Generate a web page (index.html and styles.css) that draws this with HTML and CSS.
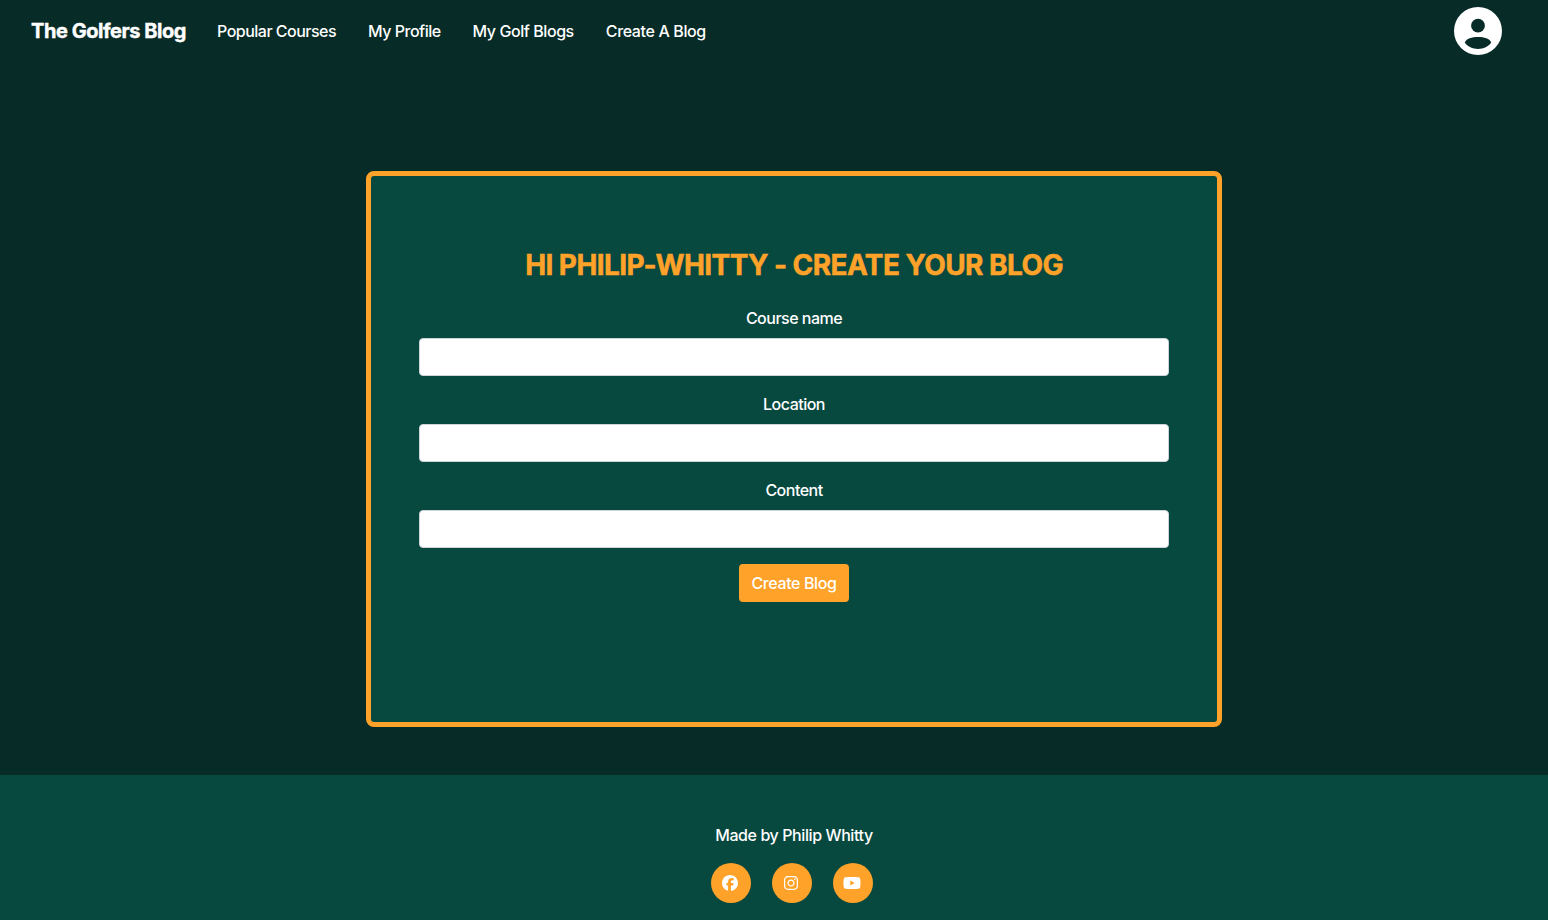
FILE: index.html
```html
<!DOCTYPE html>
<html lang="en">
<head>
<meta charset="utf-8">
<title>The Golfers Blog</title>
<link rel="stylesheet" href="styles.css">
</head>
<body>
<header class="navbar">
  <a class="brand">The Golfers Blog</a>
  <nav class="links">
    <a>Popular Courses</a>
    <a>My Profile</a>
    <a class="golf">My Golf Blogs</a>
    <a class="create">Create A Blog</a>
  </nav>
  <svg class="avatar" viewBox="0 0 48 48"><circle cx="24" cy="24" r="24" fill="#fff"/><circle class="cut" cx="24" cy="18.700" r="6.900"/><path class="cut" d="M10.800 35.600C12 31.400 18 29.900 24 29.900s12 1.500 13.200 5.700C34.500 39.700 29.500 41.900 24 41.900S13.500 39.700 10.800 35.600z"/></svg>
</header>
<main class="main">
  <form class="card">
    <h1 class="title">HI PHILIP-WHITTY - CREATE YOUR BLOG</h1>
    <div class="field"><label for="course">Course name</label><input id="course" type="text"></div>
    <div class="field"><label for="location">Location</label><input id="location" type="text"></div>
    <div class="field"><label for="content">Content</label><input id="content" type="text"></div>
    <button class="submit" type="button">Create Blog</button>
  </form>
</main>
<footer class="footer">
  <p class="credit">Made by Philip Whitty</p>
  <div class="social">
    <a><svg width="16" height="16" viewBox="0 0 512 512"><path d="M512 256C512 114.600 397.400 0 256 0S0 114.600 0 256C0 376 82.700 476.800 194.200 504.500V334.200H141.400V256h52.800V222.300c0-87.100 39.400-127.500 125-127.500c16.200 0 44.200 3.200 55.700 6.400V172c-6-.6-16.500-1-29.600-1c-42 0-58.200 15.900-58.200 57.200V256h83.600l-14.400 78.200H287V510.100C413.800 494.800 512 386.900 512 256z"/></svg></a>
    <a><svg width="14" height="16" viewBox="0 0 448 512"><path d="M224.100 141c-63.600 0-114.900 51.300-114.900 114.900s51.300 114.900 114.900 114.900S339 319.500 339 255.900 287.700 141 224.100 141zm0 189.600c-41.100 0-74.700-33.500-74.700-74.700s33.500-74.700 74.700-74.700 74.700 33.500 74.700 74.700-33.600 74.700-74.700 74.700zm146.400-194.300c0 14.900-12 26.800-26.800 26.800-14.900 0-26.800-12-26.800-26.800s12-26.800 26.800-26.800 26.800 12 26.800 26.800zm76.100 27.200c-1.700-35.900-9.900-67.700-36.200-93.900-26.200-26.200-58-34.400-93.900-36.200-37-2.100-147.900-2.100-184.900 0-35.800 1.700-67.600 9.900-93.900 36.100s-34.400 58-36.200 93.900c-2.100 37-2.100 147.900 0 184.900 1.700 35.900 9.900 67.700 36.200 93.900s58 34.400 93.900 36.200c37 2.100 147.900 2.100 184.900 0 35.900-1.700 67.700-9.900 93.900-36.200 26.200-26.200 34.400-58 36.200-93.900 2.100-37 2.100-147.800 0-184.800zM398.800 388c-7.800 19.600-22.900 34.700-42.600 42.600-29.500 11.700-99.500 9-132.100 9s-102.700 2.600-132.100-9c-19.600-7.800-34.700-22.900-42.600-42.600-11.700-29.500-9-99.500-9-132.100s-2.600-102.700 9-132.100c7.800-19.600 22.900-34.700 42.600-42.600 29.500-11.700 99.500-9 132.100-9s102.700-2.600 132.100 9c19.600 7.800 34.700 22.900 42.600 42.600 11.700 29.500 9 99.500 9 132.100s2.700 102.700-9 132.100z"/></svg></a>
    <a><svg width="18" height="16" viewBox="0 0 576 512"><path d="M549.655 124.083c-6.281-23.650-24.787-42.276-48.284-48.597C458.781 64 288 64 288 64S117.220 64 74.629 75.486c-23.497 6.322-42.003 24.947-48.284 48.597-11.412 42.867-11.412 132.305-11.412 132.305s0 89.438 11.412 132.305c6.281 23.650 24.787 41.500 48.284 47.821C117.220 448 288 448 288 448s170.780 0 213.371-11.486c23.497-6.321 42.003-24.171 48.284-47.821 11.412-42.867 11.412-132.305 11.412-132.305s0-89.438-11.412-132.305zm-317.510 213.508V175.185l142.739 81.205-142.739 81.201z"/></svg></a>
  </div>
</footer>
</body>
</html>
```
FILE: styles.css
```css
* { box-sizing: border-box; }
body {
  margin: 0;
  min-height: 920px;
  display: flex;
  flex-direction: column;
  background: #072b27;
  color: #fff;
  font: 500 16px/24px Inter, "Liberation Sans", sans-serif;
  letter-spacing: -0.51px;
}
.navbar { display: flex; align-items: center; height: 62px; padding: 0 46px 0 31px; }
.brand { font-size: 20px; font-weight: 700; letter-spacing: -0.45px; line-height: 30px; width: 186px; white-space: nowrap; -webkit-text-stroke: 0.4px #fff; }
.links { display: flex; gap: 32px; flex: 1; white-space: nowrap; }
.golf { letter-spacing: -0.44px; }
.create { letter-spacing: -0.37px; }
.avatar { width: 48px; height: 48px; }
.cut { fill: #072b27; }
.main { height: 713px; padding: 109px 0 0 40px; display: flex; justify-content: center; align-items: flex-start; }
.card {
  width: 856px;
  height: 556px;
  padding: 69px 48px 0;
  border: 5px solid #ffa229;
  border-radius: 8px;
  background: #07483f;
  display: flex;
  flex-direction: column;
  align-items: center;
}
.title { margin: 0 0 21px; font-size: 28px; line-height: 40px; font-weight: 700; color: #ffa229; white-space: nowrap; letter-spacing: -0.57px; -webkit-text-stroke: 0.5px #ffa229; }
.field { width: 750px; display: flex; flex-direction: column; align-items: center; gap: 8px; margin-bottom: 16px; }
.field input { width: 100%; height: 38px; border: 1px solid #ced4da; border-radius: 4px; background: #fff; padding: 6px 12px; }
.submit { width: 110px; height: 38px; border: 0; border-radius: 4px; padding: 0; background: #ffa229; color: #fff; font: inherit; letter-spacing: -0.4px; }
.footer { height: 145px; background: #07483f; padding: 48px 0 0 40px; display: flex; flex-direction: column; align-items: center; }
.credit { margin: 0 0 16px; letter-spacing: -0.41px; }
.social { display: flex; gap: 21px; margin-right: 4px; }
.social a { width: 40px; height: 40px; border-radius: 50%; background: #ffa229; display: flex; align-items: center; justify-content: center; padding-right: 2px; }
.social svg { fill: #fff; }
```
